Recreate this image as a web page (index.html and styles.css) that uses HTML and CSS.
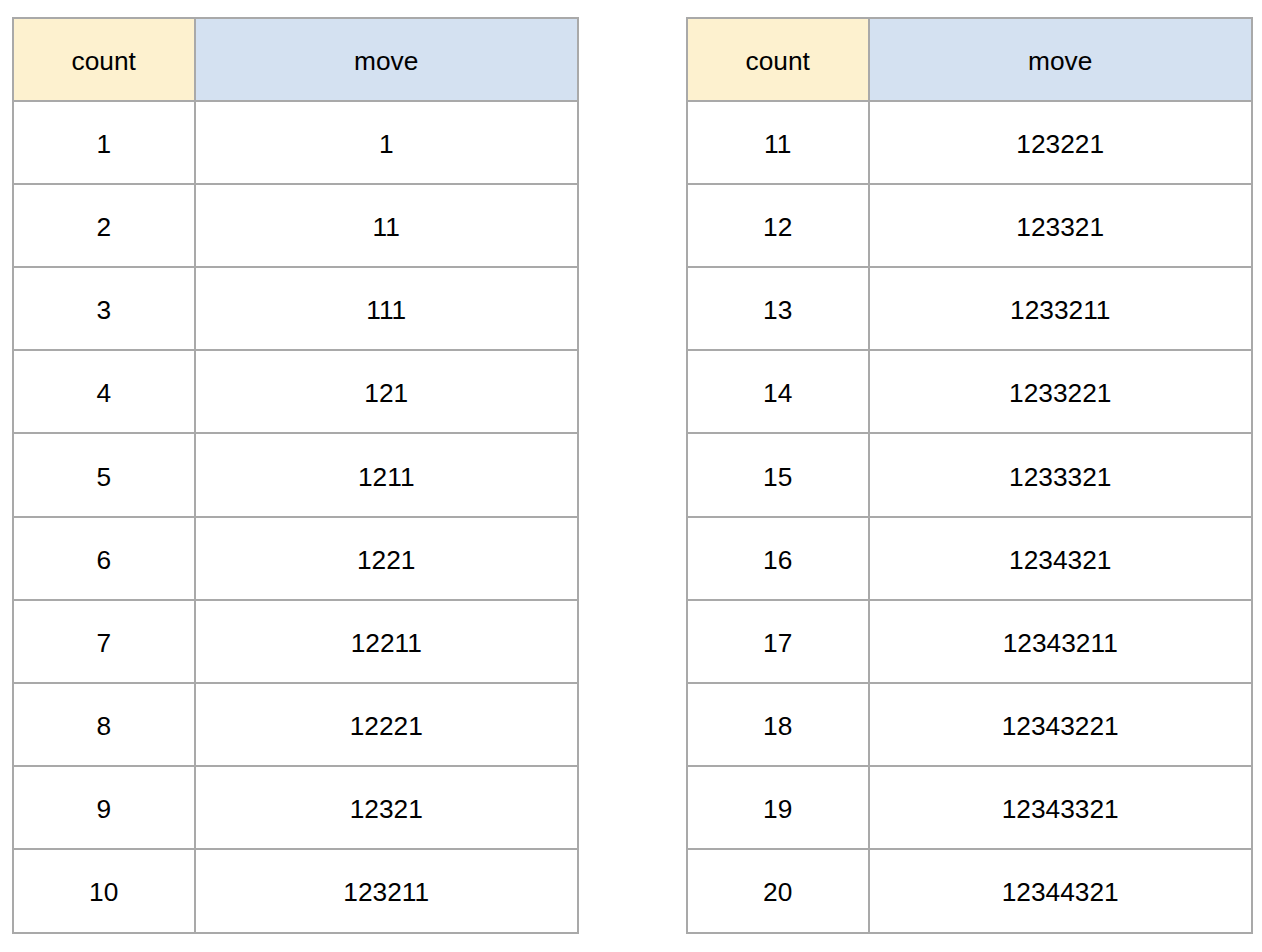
FILE: index.html
```html
<!DOCTYPE html>
<html>
<head>
<meta charset="utf-8">
<link rel="stylesheet" href="styles.css">
</head>
<body>
<div class="page">
  <div class="table">
    <div class="cell head count">count</div><div class="cell head move">move</div>
    <div class="cell">1</div><div class="cell">1</div>
    <div class="cell">2</div><div class="cell">11</div>
    <div class="cell">3</div><div class="cell">111</div>
    <div class="cell">4</div><div class="cell">121</div>
    <div class="cell">5</div><div class="cell">1211</div>
    <div class="cell">6</div><div class="cell">1221</div>
    <div class="cell">7</div><div class="cell">12211</div>
    <div class="cell">8</div><div class="cell">12221</div>
    <div class="cell">9</div><div class="cell">12321</div>
    <div class="cell">10</div><div class="cell">123211</div>
  </div>
  <div class="table">
    <div class="cell head count">count</div><div class="cell head move">move</div>
    <div class="cell">11</div><div class="cell">123221</div>
    <div class="cell">12</div><div class="cell">123321</div>
    <div class="cell">13</div><div class="cell">1233211</div>
    <div class="cell">14</div><div class="cell">1233221</div>
    <div class="cell">15</div><div class="cell">1233321</div>
    <div class="cell">16</div><div class="cell">1234321</div>
    <div class="cell">17</div><div class="cell">12343211</div>
    <div class="cell">18</div><div class="cell">12343221</div>
    <div class="cell">19</div><div class="cell">12343321</div>
    <div class="cell">20</div><div class="cell">12344321</div>
  </div>
</div>
</body>
</html>
```

FILE: styles.css
```css
html, body {
  margin: 0;
  padding: 0;
  background: #ffffff;
}
.page {
  display: flex;
  gap: 107px;
  padding: 16.5px 0 0 11.5px;
  font-family: "Liberation Sans", Arial, sans-serif;
  font-size: 26.3px;
  color: #000;
}
.table {
  display: grid;
  grid-template-columns: 180.5px 380.5px;
  grid-auto-rows: 81.2px;
  gap: 2px;
  padding: 2px;
  background: #a9a9a9;
}
.cell {
  background: #ffffff;
  display: flex;
  align-items: center;
  justify-content: center;
  padding-top: 4px;
}
.head.count {
  background: #fdf1cf;
}
.head.move {
  background: #d4e1f1;
}
```
